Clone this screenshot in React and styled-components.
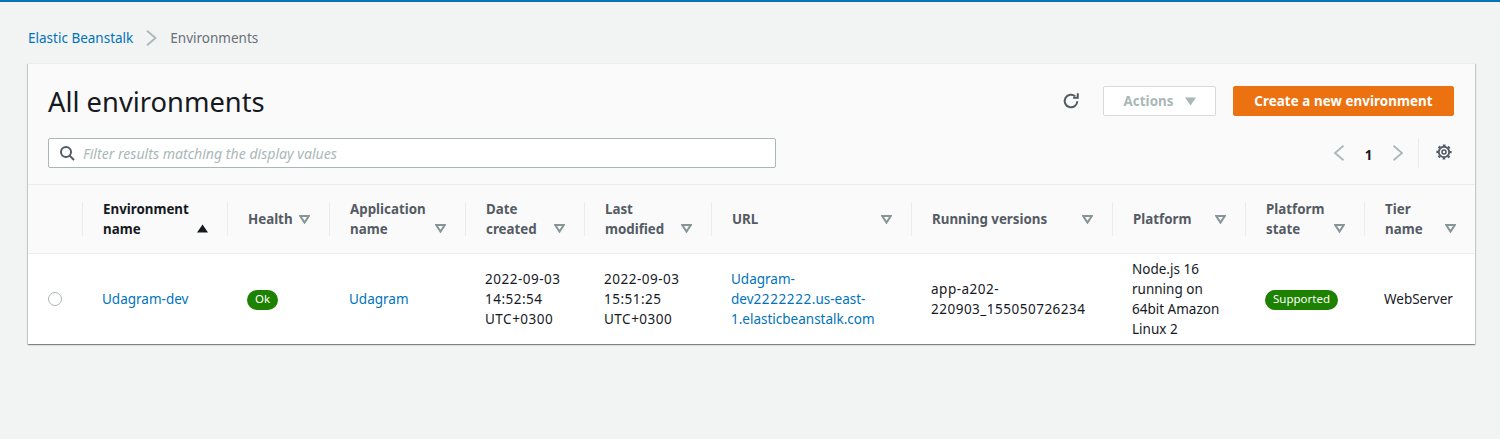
import React from 'react';
import styled, { createGlobalStyle } from 'styled-components';

const GlobalStyle = createGlobalStyle`
    html, body { margin: 0; padding: 0; height: 100%; }
    body {
        background: #f2f3f3;
        font-family: 'Noto Sans', 'Open Sans', sans-serif;
        font-size: 13.5px;
        color: #16191f;
        overflow: hidden;
    }
`;

const COLUMNS = '54px 145px 102px 136px 119px 127px 200px 201px 133px 119px 111px';

const Page = styled.div`
    height: 439px;
    box-sizing: border-box;
    border-top: 2px solid #0073bb;
    padding: 0 25px 0 28px;
`;

const Breadcrumbs = styled.nav`
    display: flex;
    align-items: center;
    height: 61px;
    padding-top: 11px;
    box-sizing: border-box;
    gap: 12px;
`;

const Crumb = styled.span`
    font-size: 13.5px;
    margin-left: 1px;
    color: #687078;
`;

const Link = styled.a`
    color: #0073bb;
    font-size: 13.5px;
    line-height: 20px;
    text-decoration: none;
`;

const Card = styled.section`
    background: #fff;
    box-shadow: 0 1px 1px 0 rgba(0, 28, 36, 0.3), 1px 1px 1px 0 rgba(0, 28, 36, 0.15), -1px 1px 1px 0 rgba(0, 28, 36, 0.15);
    border-top: 1px solid #eaeded;
`;

const CardHeader = styled.header`
    background: #fafafa;
    height: 121px;
    box-sizing: border-box;
    padding: 21px 21px 0 20px;
    border-bottom: 1px solid #eaeded;
`;

const TitleRow = styled.div`
    display: flex;
    align-items: center;
    height: 32px;
`;

const Title = styled.h1`
    flex: 1;
    margin: 0;
    padding-top: 1px;
    font-size: 27.3px;
    font-weight: 400;
    line-height: 32px;
`;

const RefreshButton = styled.span`
    display: flex;
    margin-right: 23px;
    color: #545b64;
`;

const Button = styled.button`
    height: 30px;
    box-sizing: border-box;
    border-radius: 2px;
    font-family: inherit;
    font-size: 13.33px;
    font-weight: 700;
    display: flex;
    align-items: center;
    justify-content: center;
    padding: 0;
    letter-spacing: 0.08px;
`;

const ActionsButton = styled(Button)`
    width: 113px;
    margin-right: 17px;
    gap: 11px;
    background: #fff;
    border: 1px solid #d5dbdb;
    color: #aab7b8;
`;

const PrimaryButton = styled(Button)`
    width: 221px;
    background: #ec7211;
    border: 1px solid #ec7211;
    color: #fff;
`;

const ToolRow = styled.div`
    display: flex;
    align-items: center;
    margin-top: 21px;
`;

const Search = styled.div`
    width: 728px;
    height: 30px;
    box-sizing: border-box;
    display: flex;
    align-items: center;
    gap: 8px;
    padding-left: 10px;
    background: #fff;
    border: 1px solid #aab7b8;
    border-radius: 2px;
    color: #545b64;
`;

const Placeholder = styled.span`
    font-style: italic;
    font-size: 14.1px;
    color: #aab7b8;
`;

const Pagination = styled.div`
    margin-left: auto;
    display: flex;
    align-items: center;
    color: #aab7b8;
`;

const PageNumber = styled.span`
    width: 47px;
    text-align: center;
    font-size: 13.33px;
    font-weight: 700;
    color: #16191f;
    padding-top: 3px;
`;

const Settings = styled.span`
    display: flex;
    align-items: center;
    height: 30px;
    margin: 0 2px 0 14px;
    padding: 0 0 2px 17px;
    box-sizing: border-box;
    border-left: 1px solid #eaeded;
    color: #545b64;
`;

const HeadRow = styled.div`
    display: grid;
    grid-template-columns: ${COLUMNS};
    height: 69px;
    align-items: center;
    background: #fafafa;
    border-bottom: 1px solid #eaeded;
    box-sizing: border-box;
`;

const HeadCell = styled.div`
    height: 34px;
    box-sizing: border-box;
    display: flex;
    align-items: center;
    justify-content: space-between;
    padding: 0 19px 0 20px;
    border-left: 1px solid #eaeded;
    font-weight: 700;
    font-size: 13.33px;
    line-height: 20px;
    color: ${(p) => (p.$active ? '#16191f' : '#545b64')};
`;

const HeadLabel = styled.span`
    display: block;
`;

const SortIcon = styled.svg`
    flex: none;
    align-self: ${(p) => (p.$low ? 'flex-end' : 'center')};
    margin-bottom: ${(p) => (p.$low ? '3px' : '0')};
    margin-left: 6px;
`;

const BodyRow = styled.div`
    display: grid;
    grid-template-columns: ${COLUMNS};
    height: 90px;
    align-items: center;
    background: #fff;
`;

const Cell = styled.div`
    padding-left: 20px;
    font-size: 13.5px;
    line-height: 20px;
    color: #16191f;
    letter-spacing: ${(p) => (p.$numeric ? '0.5px' : 'normal')};
`;

const Radio = styled.span`
    display: block;
    width: 14px;
    height: 14px;
    margin-left: 20px;
    border-radius: 50%;
    border: 1px solid #aab7b8;
    box-sizing: border-box;
`;

const Badge = styled.span`
    display: inline-block;
    height: 20px;
    padding: 0 8px;
    border-radius: 10px;
    background: #1d8102;
    color: #fff;
    font-size: 11.5px;
    line-height: 18px;
`;

const BlockLine = styled.span`
    display: block;
    white-space: nowrap;
`;

const WideDigits = styled.span`
    letter-spacing: 0.6px;
`;

const Caret = () => (
    <svg width="11" height="9" viewBox="0 0 11 9">
        <path d="M0 .5h11L5.5 8.5z" fill="#aab7b8" />
    </svg>
);

const SortCaret = ({ low }) => (
    <SortIcon $low={low} width="11" height="9" viewBox="0 0 11 9">
        <path d="M1.2 1h8.6L5.5 7.6z" fill="none" stroke="#879596" strokeWidth="2" />
    </SortIcon>
);

const SortedCaret = () => (
    <SortIcon $low width="11" height="9" viewBox="0 0 11 9">
        <path d="M5.5 .5L11 8.5H0z" fill="#16191f" />
    </SortIcon>
);

const Chevron = ({ dir }) => (
    <svg width="12" height="16" viewBox="0 0 12 16">
        <path
            d={dir === 'left' ? 'M10.5 .8L2 8l8.5 7.2' : 'M1.5 .8L10 8l-8.5 7.2'}
            fill="none"
            stroke="currentColor"
            strokeWidth="1.8"
        />
    </svg>
);

const columns = [
    { key: 'env', lines: ['Environment', 'name'], active: true },
    { key: 'health', lines: ['Health'] },
    { key: 'app', lines: ['Application', 'name'] },
    { key: 'date', lines: ['Date', 'created'] },
    { key: 'last', lines: ['Last', 'modified'] },
    { key: 'url', lines: ['URL'] },
    { key: 'running', lines: ['Running versions'] },
    { key: 'platform', lines: ['Platform'] },
    { key: 'state', lines: ['Platform', 'state'] },
    { key: 'tier', lines: ['Tier', 'name'] },
];

const Lines = ({ items }) => items.map((line) => <BlockLine key={line}>{line}</BlockLine>);

const App = () => {
    return (
        <Page>
            <GlobalStyle />
            <Breadcrumbs>
                <Link href="#">Elastic Beanstalk</Link>
                <svg width="12" height="16" viewBox="0 0 12 16" color="#aab7b8">
                    <path d="M2 .8L10.5 8 2 15.2" fill="none" stroke="currentColor" strokeWidth="1.8" />
                </svg>
                <Crumb>Environments</Crumb>
            </Breadcrumbs>
            <Card>
                <CardHeader>
                    <TitleRow>
                        <Title>All environments</Title>
                        <RefreshButton>
                            <svg width="18" height="18" viewBox="0 0 16 16" fill="none" stroke="currentColor" strokeWidth="1.8">
                                <path d="M13.6 8.2a5.6 5.6 0 1 1-1.9-4.4" />
                                <path d="M14 1v4.2H9.8" />
                            </svg>
                        </RefreshButton>
                        <ActionsButton>
                            Actions
                            <Caret />
                        </ActionsButton>
                        <PrimaryButton>Create a new environment</PrimaryButton>
                    </TitleRow>
                    <ToolRow>
                        <Search>
                            <svg width="16" height="16" viewBox="0 0 16 16" fill="none" stroke="currentColor" strokeWidth="2">
                                <circle cx="7" cy="7" r="5" />
                                <path d="M10.6 10.6L15 15" />
                            </svg>
                            <Placeholder>Filter results matching the display values</Placeholder>
                        </Search>
                        <Pagination>
                            <Chevron dir="left" />
                            <PageNumber>1</PageNumber>
                            <Chevron dir="right" />
                            <Settings>
                                <svg width="16" height="16" viewBox="0 0 16 16" fill="none" stroke="currentColor">
                                    <circle cx="8" cy="8" r="2" strokeWidth="1.6" />
                                    <circle cx="8" cy="8" r="5.2" strokeWidth="1.9" />
                                    <circle cx="8" cy="8" r="6.7" strokeWidth="1.8" strokeDasharray="2.6 2.66" strokeDashoffset="1.3" />
                                </svg>
                            </Settings>
                        </Pagination>
                    </ToolRow>
                </CardHeader>
                <HeadRow>
                    <span />
                    {columns.map((col) => (
                        <HeadCell key={col.key} $active={col.active}>
                            <HeadLabel>
                                <Lines items={col.lines} />
                            </HeadLabel>
                            {col.active ? <SortedCaret /> : <SortCaret low={col.lines.length > 1} />}
                        </HeadCell>
                    ))}
                </HeadRow>
                <BodyRow>
                    <Radio />
                    <Cell><Link href="#">Udagram-dev</Link></Cell>
                    <Cell><Badge>Ok</Badge></Cell>
                    <Cell><Link href="#">Udagram</Link></Cell>
                    <Cell $numeric><Lines items={['2022-09-03', '14:52:54', 'UTC+0300']} /></Cell>
                    <Cell $numeric><Lines items={['2022-09-03', '15:51:25', 'UTC+0300']} /></Cell>
                    <Cell>
                        <Link href="#">
                            <BlockLine>Udagram-</BlockLine>
                            <BlockLine>dev<WideDigits>2222222</WideDigits>.us-east-</BlockLine>
                            <BlockLine>1.elasticbeanstalk.com</BlockLine>
                        </Link>
                    </Cell>
                    <Cell $numeric><Lines items={['app-a202-', '220903_155050726234']} /></Cell>
                    <Cell><Lines items={['Node.js 16', 'running on', '64bit Amazon', 'Linux 2']} /></Cell>
                    <Cell><Badge>Supported</Badge></Cell>
                    <Cell>WebServer</Cell>
                </BodyRow>
            </Card>
        </Page>
    );
};

export default App;
